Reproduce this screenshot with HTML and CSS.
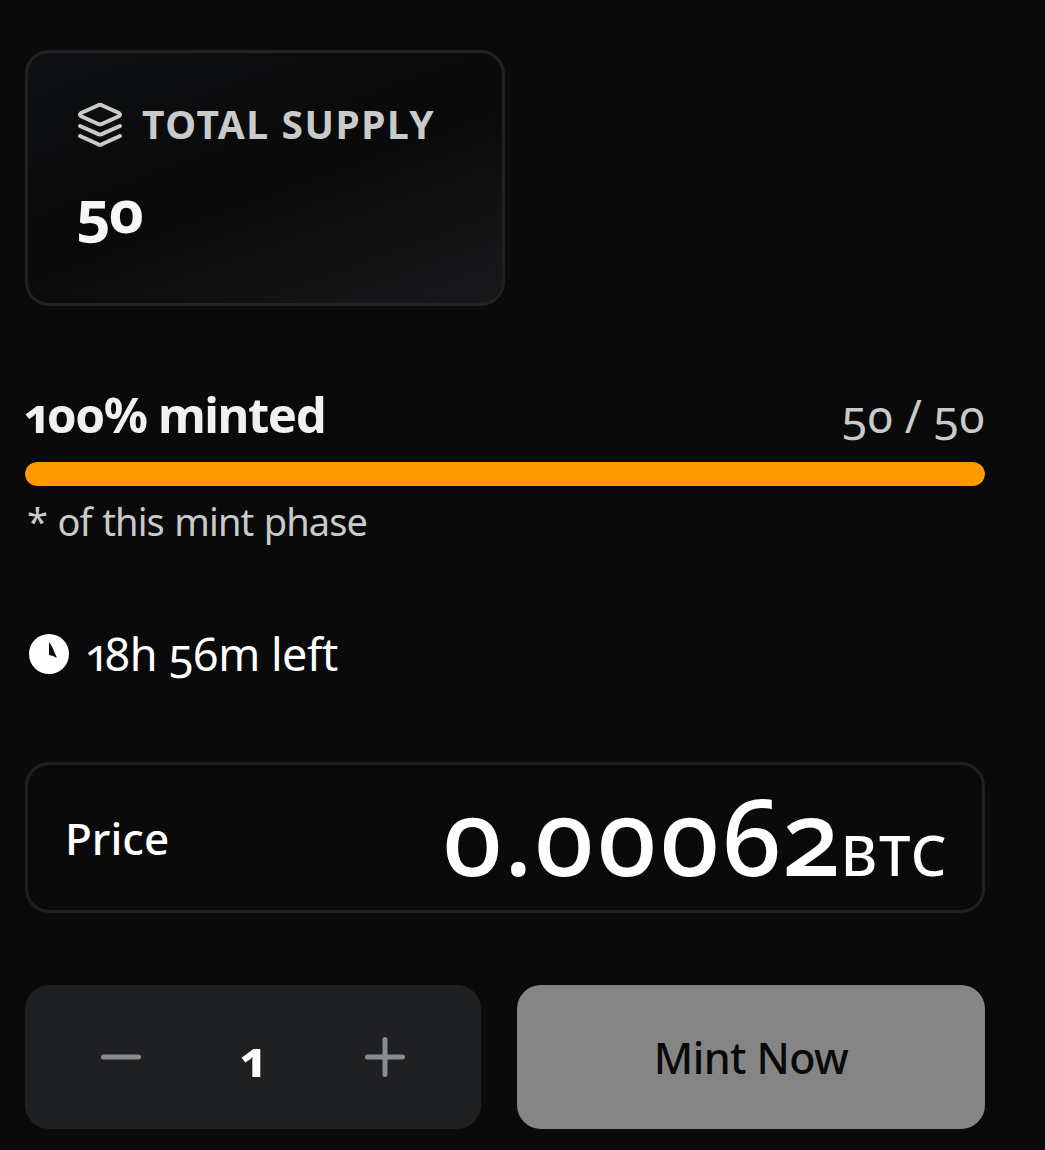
FILE: index.html
```html
<!DOCTYPE html>
<html lang="en">
<head>
  <meta charset="UTF-8" />
  <title>Mint</title>
  <link rel="stylesheet" href="styles.css">
</head>
<body>
  <main class="mint">
    <section class="supply">
      <div class="supply-head">
        <svg class="icon" viewBox="0 0 48 48" fill="none" stroke="currentColor" stroke-width="4" stroke-linecap="round" stroke-linejoin="round">
          <path d="M22.300 4.200 5 12q-2.200 1.600 0 3.200l17.300 7.800q1.700.7 3.400 0L43 15.200q2.200-1.600 0-3.200L25.700 4.200q-1.700-.7-3.400 0z" />
          <path d="M4 25 22.300 33.100q1.700.7 3.400 0L44 25" />
          <path d="M4 35 22.300 43.300q1.700.7 3.400 0L44 35" />
        </svg>
        <span class="supply-label">TOTAL SUPPLY</span>
      </div>
      <div class="supply-value">50</div>
    </section>

    <section class="progress">
      <div class="progress-head">
        <span class="minted">100% minted</span>
        <span class="count">50 / 50</span>
      </div>
      <div class="bar"><div class="bar-fill" style="width: 100%"></div></div>
      <div class="note">* of this mint phase</div>
    </section>

    <div class="time">
      <svg class="icon" viewBox="0 0 48 48">
        <circle cx="24" cy="24" r="20" fill="#fff" />
        <path d="M24 12 27 16.500 32 28 28 26 24 25z" fill="#0a0a0a" />
      </svg>
      <span class="time-left">18h 56m left</span>
    </div>

    <section class="price">
      <span class="price-label">Price</span>
      <span class="price-value"><span class="amount">0.00062</span><span class="unit">BTC</span></span>
    </section>

    <div class="actions">
      <div class="quantity">
        <button class="step" aria-label="Less">
          <svg class="icon" viewBox="0 0 48 48" stroke="currentColor" stroke-width="5" stroke-linecap="round"><path d="M6.500 24h35" /></svg>
        </button>
        <span class="quantity-value">1</span>
        <button class="step" aria-label="More">
          <svg class="icon" viewBox="0 0 48 48" stroke="currentColor" stroke-width="5" stroke-linecap="round"><path d="M6.500 24h35M24 6.500v35" /></svg>
        </button>
      </div>
      <button class="mint-btn">Mint Now</button>
    </div>
  </main>
</body>
</html>
```
FILE: styles.css
```css
* {
  box-sizing: border-box;
}

body {
  margin: 0;
  background: #0a0a0a;
  color: #fff;
  font-family: "Noto Sans", "Open Sans", sans-serif;
  font-variant-numeric: oldstyle-nums proportional-nums;
}

button {
  border: none;
  font-family: inherit;
  cursor: pointer;
}

.icon {
  display: block;
  flex: none;
  width: 48px;
  height: 48px;
}

.mint {
  height: 1150px;
  padding: 50px 60px 0 25px;
}

.supply {
  width: 480px;
  height: 256px;
  padding: 48px;
  border: 3px solid #202223;
  border-radius: 24px;
  background: linear-gradient(160deg, #0e1013 0%, #0a0a0a 45%, #0a0a0a 52%, #18191b 100%);
}

.supply-head {
  display: flex;
  gap: 18px;
  color: #c9cbca;
}

.supply-label {
  font-size: 39px;
  font-weight: 700;
  line-height: 46px;
  letter-spacing: 1.55px;
  white-space: nowrap;
}

.supply-value {
  margin-top: 31px;
  font-size: 60px;
  font-weight: 700;
  line-height: 61px;
  letter-spacing: -2.5px;
  color: #f5f7f7;
}

.progress {
  margin-top: 78px;
}

.progress-head {
  display: flex;
  justify-content: space-between;
  align-items: baseline;
  height: 60px;
  line-height: 60px;
}

.minted {
  font-size: 49px;
  font-weight: 700;
  letter-spacing: -1.4px;
  color: #f0f2f2;
}

.count {
  font-size: 46px;
  letter-spacing: -0.4px;
  color: #c9cbca;
}

.bar {
  height: 24px;
  margin-top: 18px;
  border-radius: 12px;
  background: #1f2022;
  overflow: hidden;
}

.bar-fill {
  height: 100%;
  border-radius: 12px;
  background: #ff9900;
}

.note {
  margin-top: 10px;
  padding-left: 2px;
  font-size: 38px;
  line-height: 50px;
  letter-spacing: -0.9px;
  word-spacing: 1.5px;
  color: #c9cbca;
}

.time {
  display: flex;
  gap: 14px;
  height: 48px;
  margin-top: 84px;
}

.time-left {
  font-size: 45px;
  line-height: 47px;
  letter-spacing: -0.5px;
}

.price {
  display: flex;
  justify-content: space-between;
  align-items: center;
  height: 151px;
  margin-top: 84px;
  padding: 0 37px;
  border: 3px solid #1f2022;
  border-radius: 24px;
}

.price-label {
  font-size: 44px;
  font-weight: 500;
}

.price-value {
  display: flex;
  align-items: baseline;
  padding-top: 14px;
  font-weight: 500;
  line-height: 110px;
}

.amount {
  font-size: 105px;
  letter-spacing: 0.4px;
}

.unit {
  margin-right: -3px;
  font-size: 56px;
  letter-spacing: 1.6px;
}

.actions {
  display: flex;
  gap: 36px;
  height: 144px;
  margin-top: 72px;
}

.quantity {
  display: flex;
  justify-content: space-between;
  align-items: center;
  width: 456px;
  padding: 0 72px;
  border-radius: 24px;
  background: #1f2022;
}

.step {
  padding: 0;
  background: none;
  color: #8b8c8d;
}

.quantity-value {
  font-size: 51px;
  font-weight: 700;
  line-height: 60px;
}

.mint-btn {
  width: 468px;
  padding: 0;
  border-radius: 24px;
  background: #858585;
  color: #0a0a0a;
  font-size: 43px;
  font-weight: 500;
  letter-spacing: -0.6px;
}
```
